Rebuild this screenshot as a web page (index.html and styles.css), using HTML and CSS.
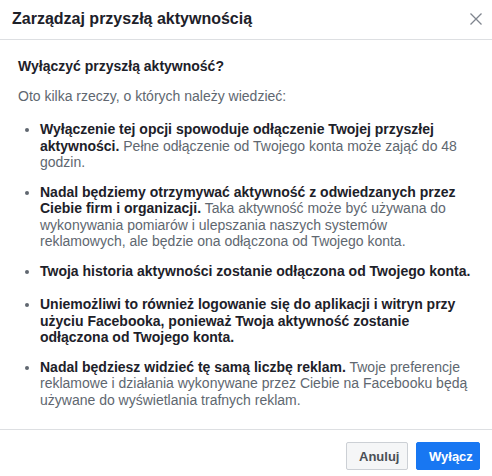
FILE: index.html
```html
<!DOCTYPE html>
<html lang="pl">
<head>
<meta charset="utf-8">
<link rel="stylesheet" href="styles.css">
</head>
<body>
<div class="dialog">
  <div class="header">
    <h1 class="title">Zarządzaj przyszłą aktywnością</h1>
    <span class="close" aria-label="Zamknij">
      <svg width="14" height="14" viewBox="0 0 14 14"><path d="M1.5 1.5 L12.5 12.5 M12.5 1.5 L1.5 12.5" stroke="#7f858e" stroke-width="1.3" fill="none"/></svg>
    </span>
  </div>
  <div class="content">
    <h2 class="subtitle">Wyłączyć przyszłą aktywność?</h2>
    <p class="intro">Oto kilka rzeczy, o których należy wiedzieć:</p>
    <ul class="list">
      <li><b>Wyłączenie tej opcji spowoduje odłączenie Twojej przyszłej aktywności.</b> Pełne odłączenie od Twojego konta może zająć do 48 godzin.</li>
      <li><b>Nadal będziemy otrzymywać aktywność z odwiedzanych przez Ciebie firm i organizacji.</b> Taka aktywność może być używana do wykonywania pomiarów i ulepszania naszych systemów reklamowych, ale będzie ona odłączona od Twojego konta.</li>
      <li class="wide"><b>Twoja historia aktywności zostanie odłączona od Twojego konta.</b></li>
      <li><b>Uniemożliwi to również logowanie się do aplikacji i witryn przy użyciu Facebooka, ponieważ Twoja aktywność zostanie odłączona od Twojego konta.</b></li>
      <li><b>Nadal będziesz widzieć tę samą liczbę reklam.</b> Twoje preferencje reklamowe i działania wykonywane przez Ciebie na Facebooku będą używane do wyświetlania trafnych reklam.</li>
    </ul>
  </div>
  <div class="footer">
    <button class="btn btn-cancel">Anuluj</button>
    <button class="btn btn-primary">Wyłącz</button>
  </div>
</div>
</body>
</html>
```
FILE: styles.css
```css
html, body {
  margin: 0;
  padding: 0;
  background: #fff;
}
body {
  font-family: "Liberation Sans", Arial, sans-serif;
  color: #1d2129;
}
.dialog {
  width: 492px;
  height: 476px;
  display: flex;
  flex-direction: column;
  background: #fff;
}
.header {
  height: 40px;
  box-sizing: border-box;
  border-bottom: 1px solid #dddfe2;
  display: flex;
  align-items: center;
  justify-content: space-between;
  padding: 0 9px 2px 12px;
}
.title {
  margin: 0;
  font-size: 16px;
  font-weight: bold;
  color: #1d2129;
}
.close {
  display: flex;
  width: 14px;
  height: 14px;
}
.content {
  flex: 1;
  padding: 18px 18px 0 18px;
}
.subtitle {
  margin: 0;
  font-size: 14px;
  font-weight: bold;
  color: #1d2129;
}
.intro {
  margin: 14px 0 0 0;
  font-size: 14px;
  color: #606770;
}
.list {
  margin: 17px 0 0 0;
  padding: 0 0 0 22px;
  font-size: 14px;
  line-height: 16.5px;
  color: #606770;
}
.list li {
  margin-bottom: 13px;
}
.list li.wide {
  margin-bottom: 17px;
}
.list b {
  color: #1d2129;
}
.footer {
  height: 47px;
  box-sizing: border-box;
  border-top: 1px solid #dddfe2;
  display: flex;
  justify-content: flex-end;
  align-items: flex-start;
  gap: 8px;
  padding: 12px 12px 0 0;
}
.btn {
  height: 28px;
  padding: 0 12px;
  font-family: "Liberation Sans", Arial, sans-serif;
  font-size: 13px;
  font-weight: bold;
  border-radius: 2px;
  cursor: pointer;
}
.btn-cancel {
  background: #f5f6f7;
  border: 1px solid #ccd0d5;
  color: #4b4f56;
  width: 62px;
}
.btn-primary {
  background: #1877f2;
  border: 1px solid #1877f2;
  color: #fff;
  width: 64px;
}
```
